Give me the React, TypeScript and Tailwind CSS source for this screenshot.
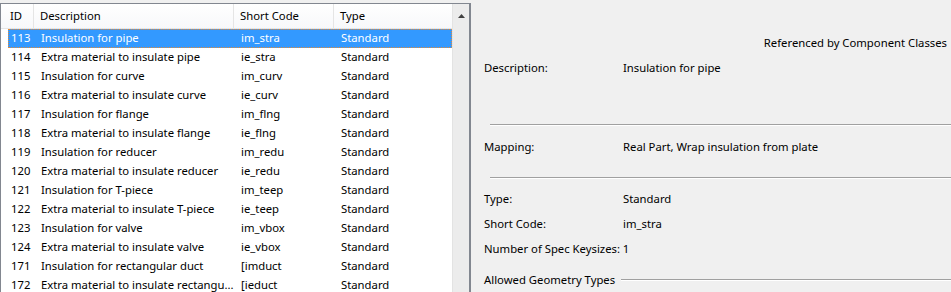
import React from "react";

type Row = { id: string; desc: string; code: string; type: string };

const rows: Row[] = [
  { id: "113", desc: "Insulation for pipe", code: "im_stra", type: "Standard" },
  { id: "114", desc: "Extra material to insulate pipe", code: "ie_stra", type: "Standard" },
  { id: "115", desc: "Insulation for curve", code: "im_curv", type: "Standard" },
  { id: "116", desc: "Extra material to insulate curve", code: "ie_curv", type: "Standard" },
  { id: "117", desc: "Insulation for flange", code: "im_flng", type: "Standard" },
  { id: "118", desc: "Extra material to insulate flange", code: "ie_flng", type: "Standard" },
  { id: "119", desc: "Insulation for reducer", code: "im_redu", type: "Standard" },
  { id: "120", desc: "Extra material to insulate reducer", code: "ie_redu", type: "Standard" },
  { id: "121", desc: "Insulation for T-piece", code: "im_teep", type: "Standard" },
  { id: "122", desc: "Extra material to insulate T-piece", code: "ie_teep", type: "Standard" },
  { id: "123", desc: "Insulation for valve", code: "im_vbox", type: "Standard" },
  { id: "124", desc: "Extra material to insulate valve", code: "ie_vbox", type: "Standard" },
  { id: "171", desc: "Insulation for rectangular duct", code: "[imduct", type: "Standard" },
  { id: "172", desc: "Extra material to insulate rectangu...", code: "[ieduct", type: "Standard" },
];

function Divider() {
  return <div className="h-[2px] border-t border-[#a0a0a0] bg-white" />;
}

function Field({ label, value }: { label: string; value: string }) {
  return (
    <div className="flex h-[25px] items-center">
      <span className="w-[139px] shrink-0">{label}</span>
      <span>{value}</span>
    </div>
  );
}

export default function App() {
  return (
    <div
      className="flex h-[292px] w-[951px] overflow-hidden bg-[#f0f0f0] text-[11.3px] text-black"
      style={{ fontFamily: '"Noto Sans", sans-serif' }}
    >
      {/* list */}
      <div className="mt-[3px] flex w-[471px] shrink-0 border-l border-t border-r-2 border-[#828790] bg-white">
        <div className="flex min-w-0 flex-1 flex-col">
          <div className="flex h-[25px] shrink-0 items-center border-b border-[#e5e5e5] bg-gradient-to-b from-white to-[#f7f8fa] pl-[2px]">
            <div className="flex h-full w-[31px] items-center border-r border-[#e5e5e5] pl-[7px]">ID</div>
            <div className="flex h-full w-[200px] items-center border-r border-[#e5e5e5] pl-[6px]">Description</div>
            <div className="flex h-full w-[100px] items-center border-r border-[#e5e5e5] pl-[6px]">Short Code</div>
            <div className="flex h-full flex-1 items-center pl-[6px]">Type</div>
          </div>
          <div className="flex flex-col pl-[7px]">
            {rows.map((r, i) => (
              <div
                key={r.id}
                className={
                  i === 0
                    ? "flex h-[19px] items-center border border-dotted border-[#e08a3c] bg-[#3399ff] text-white"
                    : "flex h-[19px] items-center border border-transparent"
                }
              >
                <span className="w-[32px] shrink-0 pl-[2px]">{r.id}</span>
                <span className="w-[200px] shrink-0 overflow-hidden whitespace-nowrap pr-[4px]">{r.desc}</span>
                <span className="w-[100px] shrink-0">{r.code}</span>
                <span>{r.type}</span>
              </div>
            ))}
          </div>
        </div>
        {/* scrollbar */}
        <div className="flex w-[17px] shrink-0 flex-col items-center border-l border-[#e3e3e3] bg-[#ececec]">
          <svg width="7" height="4" viewBox="0 0 7 4" className="mt-[10px]">
            <path d="M3.5 0 L7 4 L0 4 Z" fill="#404040" />
          </svg>
        </div>
      </div>

      {/* details */}
      <div className="flex min-w-0 flex-1 flex-col pl-[13px] pt-[35px]">
        <div className="pr-[4px] text-right leading-[16px]">Referenced by Component Classes</div>
        <div className="mt-[5px]">
          <Field label="Description:" value="Insulation for pipe" />
        </div>
        <div className="ml-[6px] mt-[43px]">
          <Divider />
        </div>
        <div className="mt-[9px]">
          <Field label="Mapping:" value="Real Part, Wrap insulation from plate" />
        </div>
        <div className="ml-[6px] mt-[17px]">
          <Divider />
        </div>
        <div className="mt-[8px]">
          <Field label="Type:" value="Standard" />
          <Field label="Short Code:" value="im_stra" />
          <div className="flex h-[25px] items-center">
            <span>Number of Spec Keysizes: 1</span>
          </div>
        </div>
        <div className="mt-[10px] flex items-center">
          <span className="shrink-0">Allowed Geometry Types</span>
          <div className="ml-[6px] flex-1">
            <Divider />
          </div>
        </div>
      </div>
    </div>
  );
}
